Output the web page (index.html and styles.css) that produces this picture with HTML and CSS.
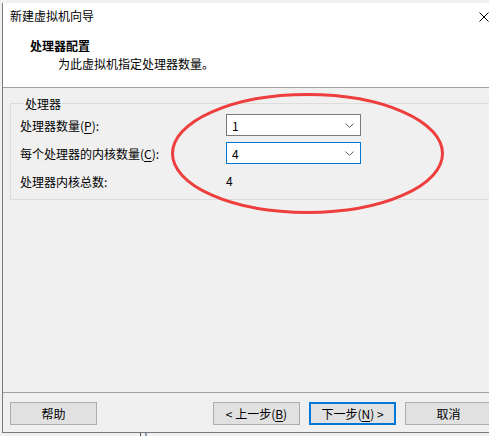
FILE: index.html
```html
<!DOCTYPE html>
<html lang="zh-CN">
<head>
<meta charset="utf-8">
<title>新建虚拟机向导</title>
<link rel="stylesheet" href="styles.css">
</head>
<body>
<div class="window">
  <div class="titlebar">
    <span class="title">新建虚拟机向导</span>
    <svg class="close" width="10" height="10" viewBox="0 0 10 10"><path d="M0.5 0.5 L9.5 9.5 M9.5 0.5 L0.5 9.5" stroke="#000" stroke-width="1" fill="none"/></svg>
  </div>
  <div class="header">
    <div class="h-title">处理器配置</div>
    <div class="h-sub">为此虚拟机指定处理器数量。</div>
  </div>
  <div class="content">
    <fieldset class="group">
      <legend>处理器</legend>
      <div class="row">
        <span class="label">处理器数量(<u>P</u>):</span>
        <div class="select">
          <span>1</span>
          <svg width="9" height="5" viewBox="0 0 9 5"><polyline points="0.5,0.5 4.5,4.5 8.5,0.5" stroke="#606060" fill="none"/></svg>
        </div>
      </div>
      <div class="row">
        <span class="label">每个处理器的内核数量(<u>C</u>):</span>
        <div class="select focus">
          <span>4</span>
          <svg width="9" height="5" viewBox="0 0 9 5"><polyline points="0.5,0.5 4.5,4.5 8.5,0.5" stroke="#606060" fill="none"/></svg>
        </div>
      </div>
      <div class="row">
        <span class="label">处理器内核总数:</span>
        <span class="value">4</span>
      </div>
    </fieldset>
  </div>
  <div class="footer">
    <button class="btn">帮助</button>
    <div class="nav">
      <button class="btn">&lt; 上一步(<u>B</u>)</button>
      <button class="btn default">下一步(<u>N</u>) &gt;</button>
      <button class="btn">取消</button>
    </div>
  </div>
  <svg class="mark" width="273" height="121" viewBox="0 0 273 121"><ellipse cx="136.5" cy="60.5" rx="135" ry="59" fill="none" stroke="#ee3e3e" stroke-width="3"/></svg>
</div>
<div class="behind"></div>
</body>
</html>
```

FILE: styles.css
```css
html, body {
  margin: 0;
  padding: 0;
  overflow: hidden;
}
body {
  width: 489px;
  height: 436px;
  background: #f0f0f0;
  font-family: "Noto Sans CJK SC", "Liberation Sans", sans-serif;
  font-size: 12px;
  color: #000;
}
.window {
  position: relative;
  margin-top: 3px;
  margin-left: 2px;
  width: 496px;
  border-left: 1px solid #7a7a7a;
  border-bottom: 1px solid #7a7a7a;
  background: #f0f0f0;
}
.titlebar {
  height: 26px;
  background: #fff;
  display: flex;
  align-items: center;
  justify-content: space-between;
  padding: 0 10px 0 7px;
}
.title {
  line-height: 26px;
}
.close {
  display: block;
  margin-top: 1px;
}
.header {
  height: 49px;
  padding-top: 9px;
  background: #fff;
  border-bottom: 1px solid #a0a0a0;
}
.h-title {
  padding-left: 27px;
  line-height: 16px;
  font-weight: bold;
}
.h-sub {
  padding-left: 55px;
  margin-top: 2px;
  line-height: 16px;
}
.content {
  height: 295px;
  padding-top: 9px;
}
.group {
  margin: 0 7px;
  padding: 0 0 7px 9px;
  border: 1px solid #dcdcdc;
  min-width: 0;
}
.group legend {
  margin-left: 4px;
  padding: 0 1px;
  line-height: 13px;
  font-size: 12px;
}
.row {
  display: flex;
  align-items: center;
  height: 22px;
  margin-top: 6px;
}
.row:first-of-type {
  margin-top: 4px;
}
.label {
  width: 206px;
  flex: none;
}
.label u, .btn u {
  text-decoration-thickness: 1px;
  text-underline-offset: 2px;
}
.select {
  box-sizing: border-box;
  width: 135px;
  height: 22px;
  border: 1px solid #7a7a7a;
  background: #fff;
  display: flex;
  align-items: center;
  justify-content: space-between;
  padding: 0 6px 0 5px;
}
.select.focus {
  border-color: #0078d7;
}
.select svg {
  display: block;
}
.value {
  line-height: 22px;
}
.footer {
  border-top: 1px solid #a0a0a0;
  padding: 9px 7px 7px 7px;
  display: flex;
  justify-content: space-between;
}
.nav {
  display: flex;
  gap: 9px;
}
.btn {
  box-sizing: border-box;
  width: 87px;
  height: 23px;
  margin: 0;
  padding: 0;
  background: #e1e1e1;
  border: 1px solid #adadad;
  font-family: "Noto Sans CJK SC", "Liberation Sans", sans-serif;
  font-size: 12px;
  color: #000;
  line-height: 20px;
}
.btn.default {
  border: 2px solid #0078d7;
}
.mark {
  position: absolute;
  left: 168px;
  top: 90px;
}
.behind {
  margin-left: 140px;
  width: 2px;
  height: 4px;
  border-left: 1px solid #555;
  border-right: 2px solid #8aa0b8;
  padding-right: 2px;
}
```
